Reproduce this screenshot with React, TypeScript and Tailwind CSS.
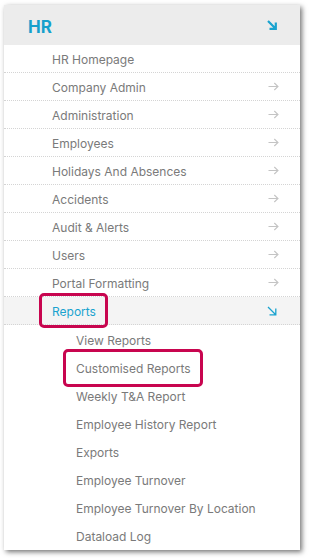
import React from "react";

const items = [
  { label: "HR Homepage", arrow: false },
  { label: "Company Admin", arrow: true },
  { label: "Administration", arrow: true },
  { label: "Employees", arrow: true },
  { label: "Holidays And Absences", arrow: true },
  { label: "Accidents", arrow: true },
  { label: "Audit & Alerts", arrow: true },
  { label: "Users", arrow: true },
  { label: "Portal Formatting", arrow: true },
];

const reports = [
  "View Reports",
  "Customised Reports",
  "Weekly T&A Report",
  "Employee History Report",
  "Exports",
  "Employee Turnover",
  "Employee Turnover By Location",
  "Dataload Log",
];

function RightArrow() {
  return (
    <svg width="11" height="9" viewBox="0 0 11 9" fill="none" stroke="#c4c4c4" strokeWidth="1.1">
      <path d="M0.5 4.5h9.5M6.3 1l3.7 3.5L6.3 8" />
    </svg>
  );
}

function DownRight({ bold }: { bold?: boolean }) {
  return (
    <svg width="10" height="10" viewBox="0 0 10 10" fill="none" stroke="#1aa3cf" strokeWidth={bold ? 2.2 : 1.3}>
      <path d="M1 1l7.5 7.5M2.5 8.8h6.3V2.5" />
    </svg>
  );
}

function Outlined({ children }: { children: React.ReactNode }) {
  return (
    <span className="relative">
      {children}
      <span className="absolute -left-[13px] -right-[12px] -top-[11px] -bottom-[9px] rounded-[5px] border-[3px] border-[#c8054f]" />
    </span>
  );
}

export default function App() {
  return (
    <div className="min-h-[558px] bg-white pl-1 pt-[5px]" style={{ fontFamily: "Inter, 'Noto Sans', sans-serif" }}>
      <div className="w-[296px] bg-white shadow-[2px_2px_5px_rgba(0,0,0,0.55)]">
        <div className="flex h-10 items-center justify-between bg-[#ececec] pl-6 pr-[23px]">
          <span className="pt-[5px] text-[17px] font-bold text-[#16a0cc]">HR</span>
          <DownRight bold />
        </div>
        {items.map((item) => (
          <div key={item.label} className="flex h-7 items-center justify-between border-b border-dotted border-[#d4d4d4] pl-12 pr-[21px] text-[12px] text-[#7a7a7a]">
            <span className="pt-[3px]">{item.label}</span>
            {item.arrow && <RightArrow />}
          </div>
        ))}
        <div className="flex h-7 items-center justify-between border-b border-dotted border-[#d4d4d4] bg-[#f4f4f4] pl-12 pr-[23px] text-[12px] text-[#1aa3cf]">
          <span className="pt-[3px]"><Outlined>Reports</Outlined></span>
          <DownRight />
        </div>
        <div className="pb-px">
          {reports.map((label) => (
            <div key={label} className="flex h-7 items-center pl-[72px] pt-[3px] text-[12px] text-[#7a7a7a]">
              {label === "Customised Reports" ? <Outlined>{label}</Outlined> : <span>{label}</span>}
            </div>
          ))}
        </div>
      </div>
    </div>
  );
}
